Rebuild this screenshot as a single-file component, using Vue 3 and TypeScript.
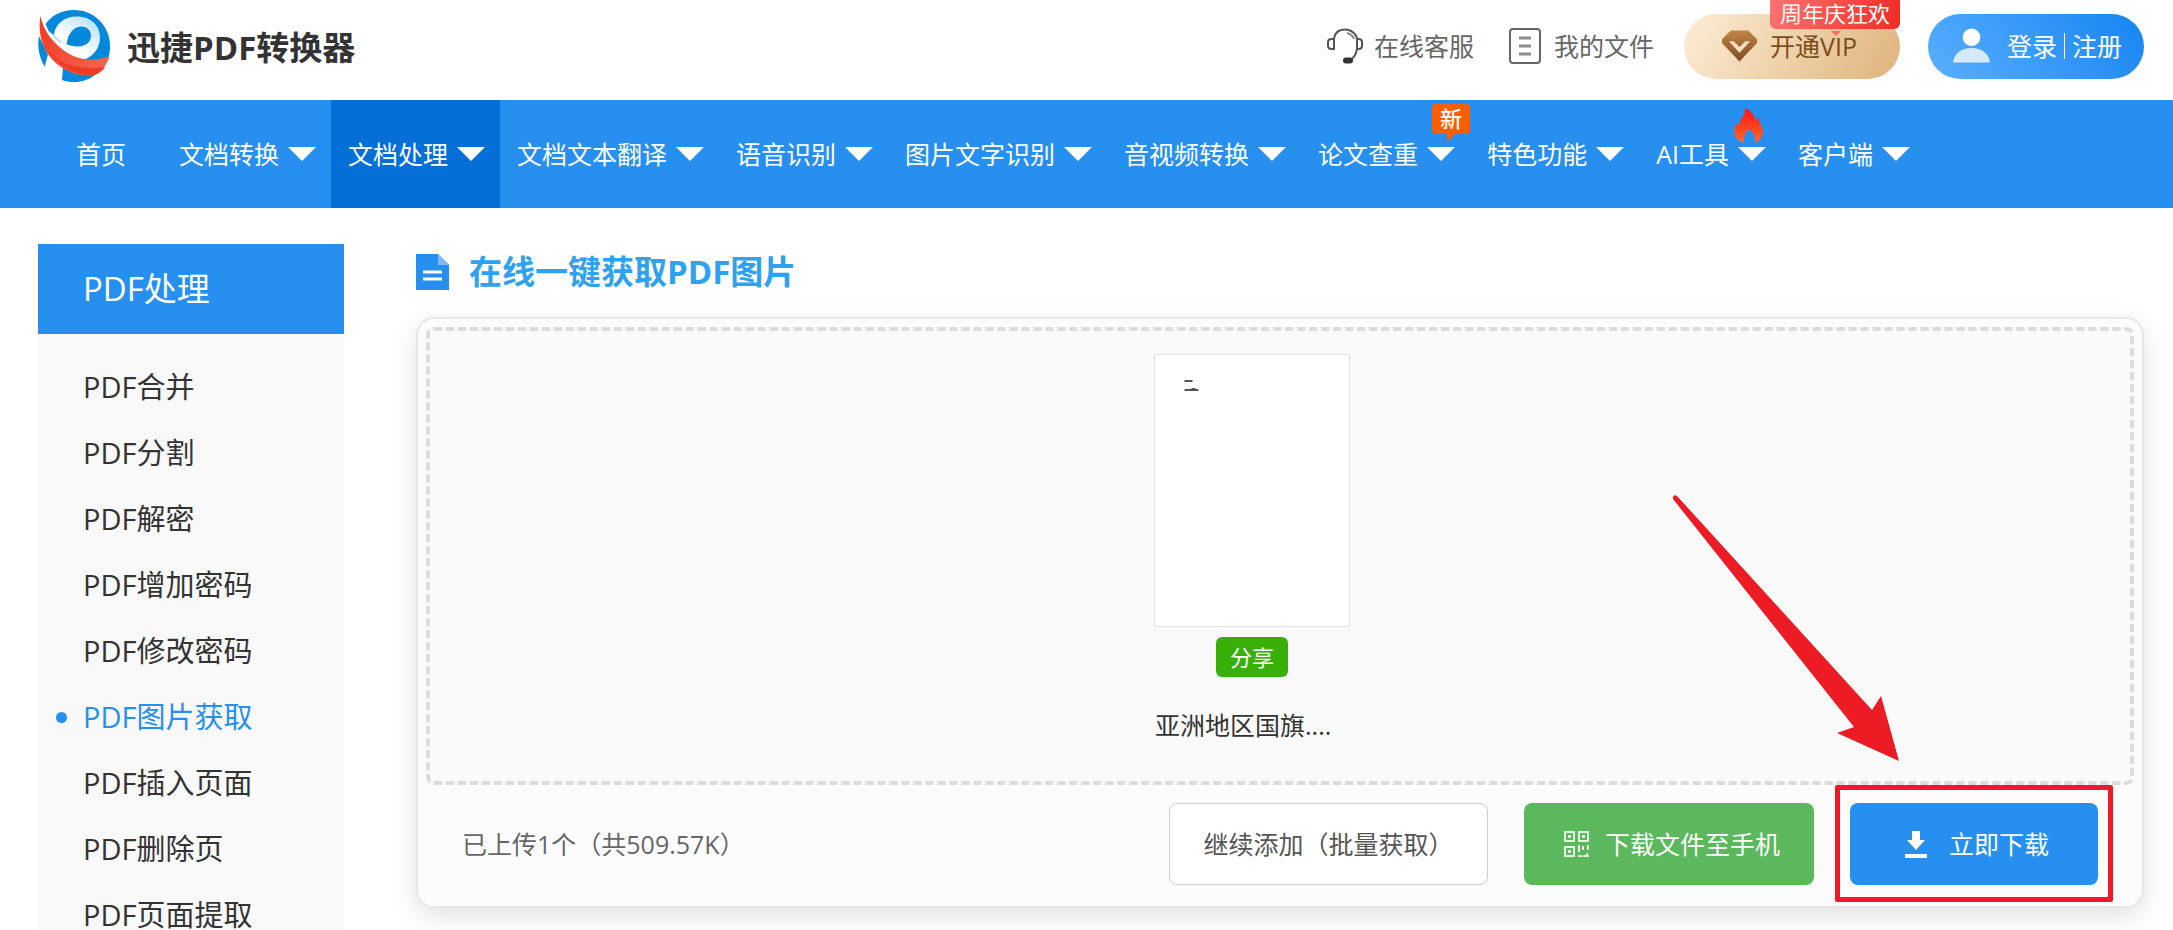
<script setup lang="ts">
import { ref } from 'vue'

interface NavItem {
  label: string
  menu: boolean
  tag?: 'new' | 'hot'
}

const navItems: NavItem[] = [
  { label: '首页', menu: false },
  { label: '文档转换', menu: true },
  { label: '文档处理', menu: true },
  { label: '文档文本翻译', menu: true },
  { label: '语音识别', menu: true },
  { label: '图片文字识别', menu: true },
  { label: '音视频转换', menu: true },
  { label: '论文查重', menu: true, tag: 'new' },
  { label: '特色功能', menu: true },
  { label: 'AI工具', menu: true, tag: 'hot' },
  { label: '客户端', menu: true },
]
const activeNav = ref('文档处理')

const tools: string[] = [
  'PDF合并',
  'PDF分割',
  'PDF解密',
  'PDF增加密码',
  'PDF修改密码',
  'PDF图片获取',
  'PDF插入页面',
  'PDF删除页',
  'PDF页面提取',
]
const activeTool = ref('PDF图片获取')
</script>

<template>
  <div class="page">
    <header class="header">
      <a class="brand" href="#">
        <svg class="brand-logo" viewBox="0 0 72 72" aria-hidden="true">
          <defs>
            <linearGradient id="ring" x1="0" y1="1" x2="1" y2="0">
              <stop offset="0.45" stop-color="#ffffff" />
              <stop offset="1" stop-color="#a9dcff" />
            </linearGradient>
            <linearGradient id="band" x1="0" y1="0" x2="1" y2="0.6">
              <stop offset="0" stop-color="#f23a22" />
              <stop offset="1" stop-color="#f4604c" />
            </linearGradient>
          </defs>
          <path d="M7.500 14C14 5 24 0 36 0c20 0 36 16 36 36 0 4-.4 8-1.500 11L45 55 20 42z" fill="#0388dc" />
          <path d="M1 26C-.5 34 0 46 7 57c.5-5 1.500-8 3-12z" fill="#0388dc" />
          <path d="M25 57 24 70c4 1.500 8 2 12 2 8 0 16-2.500 22-8z" fill="#0388dc" />
          <path d="M2.300 8C6 18 11 22 16 25 17 14 26 6.500 39 6.500c14 0 23 9 23 21C62 39 54 48 44 50 30 52 8 42 2.300 8z" fill="url(#ring)" />
          <path d="M28.500 34C30 24 35 17 43 16.500c6 0 10 4 10 9 0 7-6 11-13 11-5 0-9-1-11.500-2.500z" fill="#0388dc" />
          <path d="M16 25c3 3 7 7 12 9-4-1-9-3-13-7z" fill="#a9dcff" />
          <path d="M2.300 6C6 22 15 33 28 42c14 9 28 9 43.500 4.500C69 54 65 60 58 64.500 46 67 33 64 23 57 8 47-1 30 2.300 6z" fill="url(#band)" />
          <path d="M12 43c14 13 32 17 55 14-2 3-5 6-9 7.500C43 67 27 62 12 43z" fill="#ef3c24" />
        </svg>
        <span class="brand-name">迅捷PDF转换器</span>
      </a>

      <div class="account">
        <a class="quick service" href="#">
          <svg class="service-icon" viewBox="0 0 36 36" fill="none" stroke="#555" stroke-width="2" aria-hidden="true">
            <path d="M7 12C7 5 12 1.500 18 1.500S30 6 30 12" />
            <path d="M7 11H4.500Q1 11 1 14v4q0 3 3.500 3H7z" />
            <path d="M30 11h1.500q3.500 0 3.500 3v4q0 3-3.500 3H30z" />
            <path d="M30 21c-1 6-4 10-8 11" />
            <path d="M20 5c4 1 6 3 7 6" stroke="#888" />
            <rect x="17" y="30.500" width="8" height="4" rx="2" fill="#333" stroke="#333" />
          </svg>
          <span>在线客服</span>
        </a>
        <a class="quick files" href="#">
          <svg class="files-icon" viewBox="0 0 32 36" fill="none" aria-hidden="true">
            <rect x="1" y="1" width="30" height="34" rx="3" stroke="#666" stroke-width="2" />
            <path d="M10 10h12M10 18h12M10 26h12" stroke="#8c8c8c" stroke-width="3" />
          </svg>
          <span>我的文件</span>
        </a>
        <a class="pill vip" href="#">
          <svg class="vip-icon" viewBox="0 0 36 32" aria-hidden="true">
            <defs>
              <linearGradient id="gem" x1="0" y1="0" x2="0" y2="1">
                <stop offset="0" stop-color="#c18545" />
                <stop offset="1" stop-color="#7d4a26" />
              </linearGradient>
            </defs>
            <path d="M9 0h18l9 9v4L18 32 0 13V9z" fill="url(#gem)" />
            <path d="M7 11h5l6 6 6-6h5L18 23z" fill="#f6dfc0" />
          </svg>
          <span>开通VIP</span>
          <span class="promo">周年庆狂欢</span>
        </a>
        <a class="pill login" href="#">
          <svg class="user-icon" viewBox="0 0 38 36" aria-hidden="true">
            <circle cx="19" cy="9" r="9" fill="#fff" />
            <path d="M0 35C1 25 9 20 19 20s18 5 19 15z" fill="#d5e9ff" />
          </svg>
          <span>登录</span>
          <span class="divider"></span>
          <span>注册</span>
        </a>
      </div>
    </header>

    <nav class="nav" aria-label="主导航">
      <a
        v-for="item in navItems"
        :key="item.label"
        href="#"
        class="nav-item"
        :class="{ plain: !item.menu, active: item.label === activeNav }"
        @click.prevent="activeNav = item.label"
      >
        <span>{{ item.label }}</span>
        <span v-if="item.menu" class="caret"></span>
        <span v-if="item.tag === 'new'" class="tag-new">新</span>
        <svg v-if="item.tag === 'hot'" class="tag-hot" viewBox="0 0 29 35" aria-hidden="true">
          <defs>
            <linearGradient id="flame" x1="0" y1="0" x2="0" y2="1">
              <stop offset="0" stop-color="#ff1212" />
              <stop offset="1" stop-color="#ff6a2b" />
            </linearGradient>
          </defs>
          <path
            d="M11 0c5 2 9 6 10 12 2-1 3-2 4-3 0 3 0 5 2 8 4 8 1 15-6 18 1-6-1-10-6-14-4 4-6 8-5 14C1 32-2 24 2 16c1 1 2 1 3 1C5 12 12 8 11 0z"
            fill="url(#flame)"
          />
        </svg>
      </a>
    </nav>

    <div class="body">
      <aside class="sidebar">
        <h2 class="sidebar-title">PDF处理</h2>
        <ul class="tool-list">
          <li v-for="tool in tools" :key="tool">
            <a
              href="#"
              class="tool"
              :class="{ current: tool === activeTool }"
              @click.prevent="activeTool = tool"
            >{{ tool }}</a>
          </li>
        </ul>
      </aside>

      <main class="main">
        <h1 class="title">
          <svg class="title-icon" viewBox="0 0 33 36" aria-hidden="true">
            <path d="M0 0h22l11 11v25H0z" fill="#278ff0" />
            <path d="M22 0l11 11H22z" fill="#7dbcfb" />
            <path d="M7 18h19M7 25h19" stroke="#fff" stroke-width="3" />
          </svg>
          <span>在线一键获取PDF图片</span>
        </h1>

        <section class="card">
          <div class="drop">
            <div class="file">
              <div class="thumb">
                <svg class="thumb-page" viewBox="0 0 193 271" aria-hidden="true">
                  <path d="M29 26h8" stroke="#555" stroke-width="2" />
                  <path d="M29 35h14M36 34h4" stroke="#555" stroke-width="2" />
                </svg>
              </div>
              <button class="share" type="button">分享</button>
              <p class="file-name">亚洲地区国旗....</p>
            </div>
          </div>

          <div class="actions">
            <p class="summary">已上传1个（共509.57K）</p>
            <button class="btn add" type="button">继续添加（批量获取）</button>
            <button class="btn phone" type="button">
              <svg class="qr-icon" viewBox="0 0 25 26" fill="none" stroke="#e4f5e4" stroke-width="2" aria-hidden="true">
                <rect x="1" y="1" width="9" height="9" />
                <rect x="15" y="1" width="9" height="9" />
                <rect x="1" y="16" width="9" height="9" />
                <path d="M4 5.500h3M18 5.500h3M4 20.500h3" stroke-width="3" />
                <path d="M15 14v7M14 25h4M19 15v4M24 14v5M19 25h6M23 22v3" />
              </svg>
              <span>下载文件至手机</span>
            </button>
            <div class="spotlight">
              <button class="btn download" type="button">
                <svg class="download-icon" viewBox="0 0 22 27" fill="#fff" aria-hidden="true">
                  <path d="M7 0h8v9h5l-9 10-9-10h5z" />
                  <path d="M0 23h22v4H0z" />
                </svg>
                <span>立即下载</span>
              </button>
              <div class="frame"></div>
              <svg class="arrow" viewBox="0 0 226 266" aria-hidden="true">
                <path d="M0 2Q1-1 4 1L199 215 208 201 226 266 164 238 181 232 0 4z" fill="#ed1c24" />
              </svg>
            </div>
          </div>
        </section>
      </main>
    </div>
  </div>
</template>

<style>
body {
  margin: 0;
  background: #fff;
}
</style>

<style scoped>
.page {
  min-height: 100vh;
  font-family: "Open Sans", "Noto Sans CJK SC", sans-serif;
  font-size: 25px;
  line-height: 36px;
  color: #333;
  background: #fff;
}

.page * {
  box-sizing: border-box;
}

a {
  color: inherit;
  text-decoration: none;
}

button {
  font: inherit;
  cursor: pointer;
}

h1,
h2,
p,
ul {
  margin: 0;
  padding: 0;
}

span {
  white-space: nowrap;
}

svg {
  flex: none;
}

.header {
  display: flex;
  align-items: center;
  justify-content: space-between;
  height: 100px;
  padding: 0 29px 8px 38px;
}

.brand {
  display: flex;
  align-items: center;
  gap: 17px;
}

.brand-logo {
  width: 72px;
  height: 72px;
}

.brand-name {
  padding-top: 3px;
  font-size: 33px;
  line-height: 48px;
  font-weight: 700;
}

.account {
  display: flex;
  align-items: center;
}

.quick {
  display: flex;
  align-items: center;
  color: #666;
}

.service {
  gap: 11px;
  margin-right: 35px;
}

.service-icon {
  width: 36px;
  height: 36px;
}

.files {
  gap: 13px;
  margin-right: 30px;
}

.files-icon {
  width: 32px;
  height: 36px;
}

.pill {
  position: relative;
  display: flex;
  align-items: center;
  width: 216px;
  height: 65px;
  border-radius: 33px;
}

.vip {
  gap: 13px;
  margin-right: 28px;
  padding-left: 38px;
  color: #7b4d20;
  background: linear-gradient(120deg, #fdeed6, #dfb37c);
}

.vip-icon {
  width: 35px;
  height: 32px;
}

.promo {
  position: absolute;
  top: -14px;
  right: 0;
  width: 130px;
  height: 29px;
  border-radius: 0 0 6px 6px;
  font-size: 22px;
  line-height: 26px;
  text-align: center;
  color: #fff;
  background: linear-gradient(110deg, #ff7470, #f02a24);
}

.promo::after {
  content: "";
  position: absolute;
  top: 31px;
  left: 61px;
  border: 5px solid transparent;
  border-top-color: #ff6b66;
  border-bottom: 0;
}

.login {
  padding-left: 25px;
  color: #fff;
  background: linear-gradient(50deg, #5aafff, #1685f1);
}

.user-icon {
  width: 37px;
  height: 36px;
  margin-right: 17px;
}

.divider {
  width: 1px;
  height: 26px;
  margin: 0 7px;
  background: #fff;
}

.nav {
  display: flex;
  height: 108px;
  padding-left: 40px;
  color: #fff;
  background: #278ff0;
}

.nav-item {
  position: relative;
  display: flex;
  align-items: center;
  gap: 9px;
  padding: 0 15px 0 17px;
}

.nav-item.plain {
  padding: 0 36px;
}

.nav-item.active {
  background: #036fd7;
}

.caret {
  border: 14px solid transparent;
  border-top-color: #fff;
  border-bottom: 0;
}

.tag-new {
  position: absolute;
  top: 4px;
  right: 0;
  width: 38px;
  height: 30px;
  border-radius: 4px;
  font-size: 22px;
  line-height: 28px;
  font-weight: 500;
  text-align: center;
  background: #ff5e00;
}

.tag-new::after {
  content: "";
  position: absolute;
  top: 29px;
  left: 15px;
  border-top: 9px solid #ff5e00;
  border-right: 9px solid transparent;
}

.tag-hot {
  position: absolute;
  top: 8px;
  right: 18px;
  width: 29px;
  height: 35px;
}

.body {
  display: flex;
  align-items: flex-start;
  gap: 72px;
  padding: 36px 29px 0 38px;
}

.sidebar {
  flex: none;
  width: 306px;
  background: #f9f9f9;
}

.sidebar-title {
  padding-left: 45px;
  font-size: 33px;
  line-height: 90px;
  font-weight: 400;
  color: #fff;
  background: #278ff0;
}

.tool-list {
  padding: 20px 0;
  list-style: none;
}

.tool {
  position: relative;
  display: block;
  padding-left: 45px;
  font-size: 29px;
  line-height: 66px;
}

.tool.current {
  color: #278ff0;
}

.tool.current::before {
  content: "";
  position: absolute;
  top: 28px;
  left: 18px;
  width: 11px;
  height: 11px;
  border-radius: 50%;
  background: #278ff0;
}

.main {
  flex: 1;
  min-width: 0;
}

.title {
  display: flex;
  align-items: center;
  gap: 20px;
  height: 56px;
  font-size: 33px;
  line-height: 48px;
  font-weight: 700;
  color: #2ea2f1;
}

.title-icon {
  width: 33px;
  height: 36px;
}

.card {
  margin-top: 17px;
  border: 2px solid #e8e8e8;
  border-radius: 18px;
  background: #fcfcfc;
  box-shadow: 0 8px 26px rgba(0, 0, 0, 0.12);
}

.drop {
  display: flex;
  justify-content: center;
  margin: 8px 8px 0;
  padding: 23px 56px 38px 0;
  border: 4px dashed #dcdcdc;
  border-radius: 8px;
  background: #fafafa;
}

.file {
  display: flex;
  flex-direction: column;
  align-items: center;
  width: 196px;
}

.thumb {
  width: 100%;
  height: 273px;
  border: 1px solid #e2e2e2;
  background: #fff;
}

.thumb-page {
  display: block;
  width: 100%;
  height: 100%;
}

.share {
  margin-top: 10px;
  width: 72px;
  height: 40px;
  padding: 0;
  border: 0;
  border-radius: 6px;
  font-size: 22px;
  line-height: 40px;
  color: #fff;
  background: #39b007;
}

.file-name {
  align-self: flex-start;
  margin-top: 30px;
  padding-left: 1px;
  white-space: nowrap;
}

.actions {
  display: flex;
  align-items: center;
  gap: 36px;
  padding: 18px 44px 21px;
}

.summary {
  flex: 1;
  color: #666;
  white-space: nowrap;
}

.btn {
  display: flex;
  align-items: center;
  justify-content: center;
  height: 82px;
  padding: 0;
  border: 0;
  border-radius: 8px;
  color: #fff;
  white-space: nowrap;
}

.add {
  width: 319px;
  border: 1px solid #d0d0d0;
  color: #555;
  background: #fff;
}

.phone {
  gap: 16px;
  width: 290px;
  padding-left: 6px;
  background: #5cb85c;
}

.qr-icon {
  width: 25px;
  height: 26px;
}

.spotlight {
  position: relative;
}

.download {
  gap: 22px;
  width: 248px;
  padding-left: 6px;
  background: #278ff0;
}

.download-icon {
  width: 22px;
  height: 27px;
}

.frame {
  position: absolute;
  inset: -18px -15px -17px;
  border: 5px solid #ed1c24;
  border-radius: 2px;
  pointer-events: none;
}

.arrow {
  position: absolute;
  bottom: calc(100% + 42px);
  left: -177px;
  width: 226px;
  height: 266px;
  pointer-events: none;
}
</style>
